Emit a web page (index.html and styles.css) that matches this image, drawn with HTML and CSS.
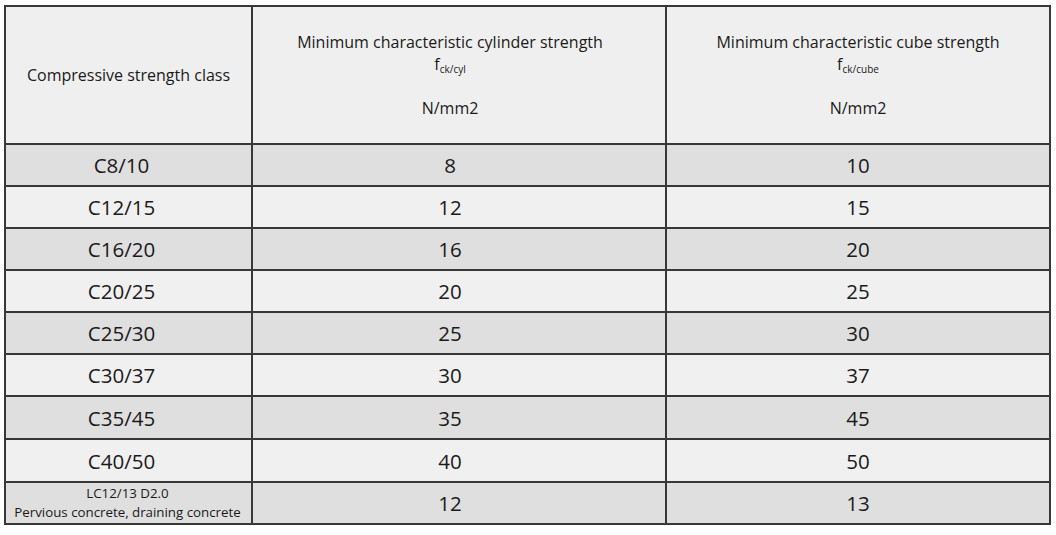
FILE: index.html
```html
<!DOCTYPE html>
<html>
<head>
<meta charset="utf-8">
<link rel="stylesheet" href="styles.css">
</head>
<body>
<table class="grid">
  <colgroup>
    <col class="c1"><col class="c2"><col class="c3">
  </colgroup>
  <thead>
    <tr class="head">
      <th class="h1">Compressive strength class</th>
      <th class="mid">Minimum characteristic cylinder strength<br><span class="f">f<sub>ck/cyl</sub></span><br><br>N/mm2</th>
      <th>Minimum characteristic cube strength<br><span class="f">f<sub>ck/cube</sub></span><br><br>N/mm2</th>
    </tr>
  </thead>
  <tbody>
    <tr class="dark"><td class="cls">C8/10</td><td class="mid">8</td><td>10</td></tr>
    <tr class="light"><td class="cls">C12/15</td><td class="mid">12</td><td>15</td></tr>
    <tr class="dark"><td class="cls">C16/20</td><td class="mid">16</td><td>20</td></tr>
    <tr class="light"><td class="cls">C20/25</td><td class="mid">20</td><td>25</td></tr>
    <tr class="dark"><td class="cls">C25/30</td><td class="mid">25</td><td>30</td></tr>
    <tr class="light"><td class="cls">C30/37</td><td class="mid">30</td><td>37</td></tr>
    <tr class="dark tall"><td class="cls">C35/45</td><td class="mid">35</td><td>45</td></tr>
    <tr class="light tall"><td class="cls">C40/50</td><td class="mid">40</td><td>50</td></tr>
    <tr class="dark"><td class="small">LC12/13 D2.0<br>Pervious concrete, draining concrete</td><td class="mid">12</td><td>13</td></tr>
  </tbody>
</table>
</body>
</html>
```
FILE: styles.css
```css
html, body {
  margin: 0;
  padding: 0;
  background: #ffffff;
}
body {
  padding: 5px 0 0 4px;
  font-family: "Open Sans", "Liberation Sans", sans-serif;
  color: #1a1a1a;
}
.grid {
  border-collapse: collapse;
  width: 1045px;
  table-layout: fixed;
}
.c1 { width: 247px; }
.c2 { width: 414px; }
.c3 { width: 384px; }
.grid th, .grid td {
  border: 2px solid #383838;
  text-align: center;
  vertical-align: middle;
  padding: 0;
}
.head {
  height: 138px;
  background: #efefef;
}
.grid th {
  font-weight: normal;
  font-size: 16px;
  line-height: 22px;
  height: 136px;
}
.grid .mid {
  padding-right: 18px;
}
.f {
  font-size: 16px;
}
.f sub {
  font-size: 10px;
  vertical-align: -3px;
  line-height: 0;
}
.grid td {
  font-size: 20.5px;
  height: 40px;
  line-height: 24px;
}
.grid td.cls {
  padding-right: 14px;
}
.tall td {
  height: 41px;
}
.dark { background: #dfdfdf; }
.light { background: #f0f0f0; }
.grid td.small {
  font-size: 13.3px;
  line-height: 19px;
  padding-right: 2px;
}
```
